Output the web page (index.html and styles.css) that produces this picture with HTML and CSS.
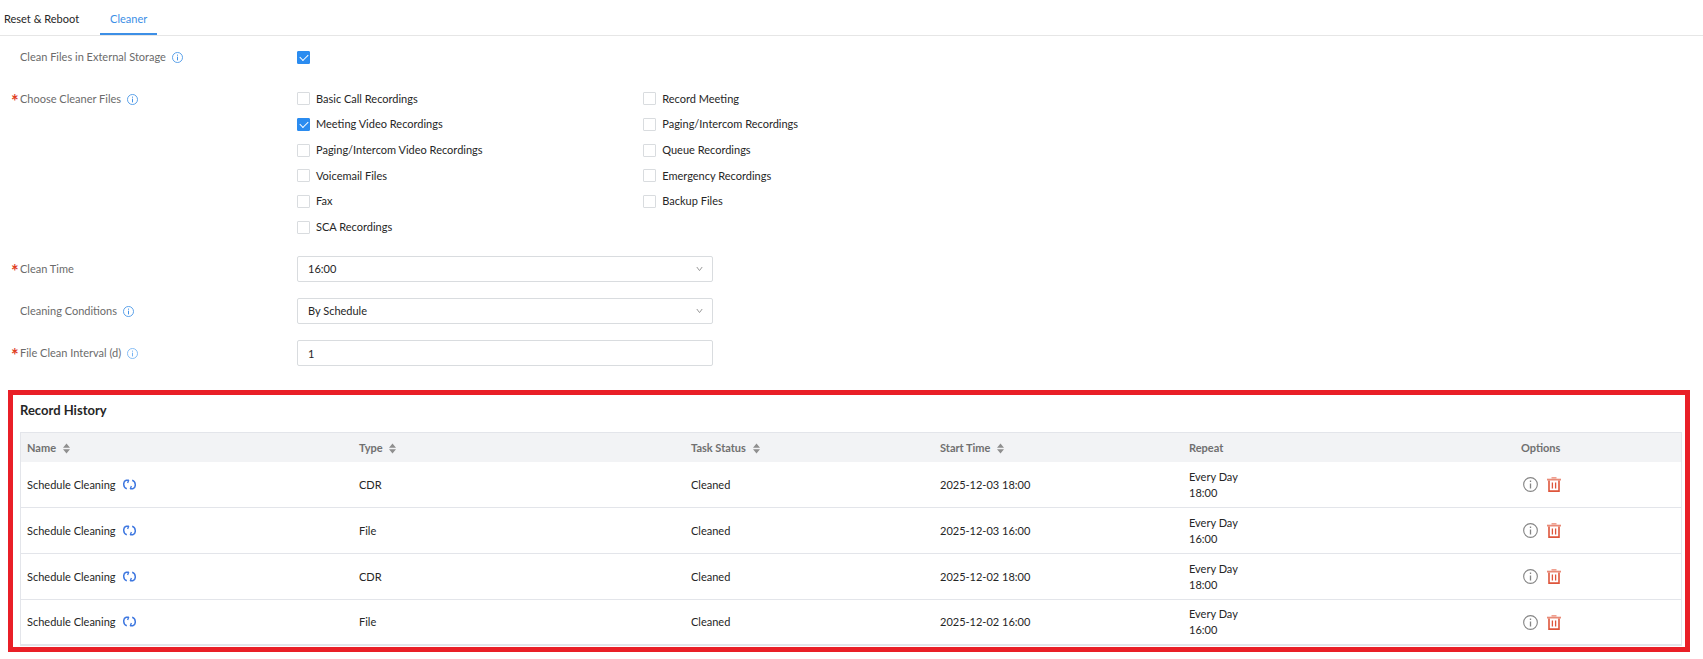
FILE: index.html
```html
<!DOCTYPE html>
<html lang="en">
<head>
    <meta charset="UTF-8">
    <meta name="viewport" content="width=device-width, initial-scale=1.0">
    <title>Cleaner</title>
    <link rel="stylesheet" href="styles.css">
</head>
<body>
    <!-- shared icons -->
    <svg class="sprite" aria-hidden="true">
        <symbol id="info" viewBox="0 0 16 16">
            <circle cx="8" cy="8" r="7.3" fill="none" stroke="currentColor" stroke-width="1.2" />
            <path d="M8 6.8v5.4M8 3.8v1.6" fill="none" stroke="currentColor" stroke-width="1.4" />
        </symbol>
        <symbol id="sort" viewBox="0 0 7 11">
            <path d="M0 4.8L3.5 0.4L7 4.8zM0 6.2L3.5 10.6L7 6.2z" fill="currentColor" />
        </symbol>
        <symbol id="loop" viewBox="0 0 13 11">
            <path d="M3.8 9.8C-0.2 8.6 -0.2 2.2 3.2 1.2H5.8M9.2 1.2C13.2 2.4 13.2 8.8 9.8 9.8H7.2" fill="none" stroke="currentColor" stroke-width="1.5" />
            <path d="M5.8 1L4.6 4M7.2 10L8.4 7" fill="none" stroke="currentColor" stroke-width="1.3" />
        </symbol>
        <symbol id="trash" viewBox="0 0 14 15">
            <path d="M4.5 0.8h5" stroke="#f0a090" stroke-width="1.6" />
            <path d="M0 2.6h14" stroke="#e88a77" stroke-width="1.8" />
            <path d="M2 3.4v10.7h10V3.4" fill="none" stroke="currentColor" stroke-width="1.6" />
            <path d="M5.4 5.5v6M8.6 5.5v6" stroke="currentColor" stroke-width="1.3" />
        </symbol>
    </svg>

    <nav class="tabs">
        <a href="#reset">Reset &amp; Reboot</a>
        <a href="#cleaner" class="active">Cleaner</a>
    </nav>

    <form class="form">
        <div class="row">
            <label class="label" for="external">Clean Files in External Storage <svg class="info"><use href="#info" /></svg></label>
            <div class="check"><input type="checkbox" id="external" checked></div>
        </div>
        <div class="row">
            <div class="label required" id="files-label">Choose Cleaner Files <svg class="info"><use href="#info" /></svg></div>
            <div class="files" role="group" aria-labelledby="files-label">
                <label class="check"><input type="checkbox">Basic Call Recordings</label>
                <label class="check"><input type="checkbox">Record Meeting</label>
                <label class="check"><input type="checkbox" checked>Meeting Video Recordings</label>
                <label class="check"><input type="checkbox">Paging/Intercom Recordings</label>
                <label class="check"><input type="checkbox">Paging/Intercom Video Recordings</label>
                <label class="check"><input type="checkbox">Queue Recordings</label>
                <label class="check"><input type="checkbox">Voicemail Files</label>
                <label class="check"><input type="checkbox">Emergency Recordings</label>
                <label class="check"><input type="checkbox">Fax</label>
                <label class="check"><input type="checkbox">Backup Files</label>
                <label class="check"><input type="checkbox">SCA Recordings</label>
            </div>
        </div>
        <div class="row">
            <label class="label required" for="time">Clean Time</label>
            <div class="field">
                <select id="time"><option>16:00</option></select>
                <svg class="arrow" viewBox="0 0 7 6"><path d="M0.8 1L3.5 4.6L6.2 1" /></svg>
            </div>
        </div>
        <div class="row">
            <label class="label" for="conditions">Cleaning Conditions <svg class="info"><use href="#info" /></svg></label>
            <div class="field">
                <select id="conditions"><option>By Schedule</option></select>
                <svg class="arrow" viewBox="0 0 7 6"><path d="M0.8 1L3.5 4.6L6.2 1" /></svg>
            </div>
        </div>
        <div class="row">
            <label class="label required" for="interval">File Clean Interval (d) <svg class="info light"><use href="#info" /></svg></label>
            <div class="field"><input type="text" id="interval" value="1"></div>
        </div>
    </form>

    <section class="history">
        <h2>Record History</h2>
        <table>
            <thead>
                <tr>
                    <th class="wide">Name <svg class="sort"><use href="#sort" /></svg></th>
                    <th class="wide">Type <svg class="sort"><use href="#sort" /></svg></th>
                    <th class="medium">Task Status <svg class="sort"><use href="#sort" /></svg></th>
                    <th class="medium">Start Time <svg class="sort"><use href="#sort" /></svg></th>
                    <th class="wide">Repeat</th>
                    <th>Options</th>
                </tr>
            </thead>
            <tbody>
                <tr>
                    <td>Schedule Cleaning <svg class="loop"><use href="#loop" /></svg></td>
                    <td>CDR</td>
                    <td>Cleaned</td>
                    <td>2025-12-03 18:00</td>
                    <td>Every Day<br>18:00</td>
                    <td>
                        <div class="options">
                            <button aria-label="Details"><svg class="details"><use href="#info" /></svg></button>
                            <button aria-label="Delete"><svg class="trash"><use href="#trash" /></svg></button>
                        </div>
                    </td>
                </tr>
                <tr>
                    <td>Schedule Cleaning <svg class="loop"><use href="#loop" /></svg></td>
                    <td>File</td>
                    <td>Cleaned</td>
                    <td>2025-12-03 16:00</td>
                    <td>Every Day<br>16:00</td>
                    <td>
                        <div class="options">
                            <button aria-label="Details"><svg class="details"><use href="#info" /></svg></button>
                            <button aria-label="Delete"><svg class="trash"><use href="#trash" /></svg></button>
                        </div>
                    </td>
                </tr>
                <tr>
                    <td>Schedule Cleaning <svg class="loop"><use href="#loop" /></svg></td>
                    <td>CDR</td>
                    <td>Cleaned</td>
                    <td>2025-12-02 18:00</td>
                    <td>Every Day<br>18:00</td>
                    <td>
                        <div class="options">
                            <button aria-label="Details"><svg class="details"><use href="#info" /></svg></button>
                            <button aria-label="Delete"><svg class="trash"><use href="#trash" /></svg></button>
                        </div>
                    </td>
                </tr>
                <tr>
                    <td>Schedule Cleaning <svg class="loop"><use href="#loop" /></svg></td>
                    <td>File</td>
                    <td>Cleaned</td>
                    <td>2025-12-02 16:00</td>
                    <td>Every Day<br>16:00</td>
                    <td>
                        <div class="options">
                            <button aria-label="Details"><svg class="details"><use href="#info" /></svg></button>
                            <button aria-label="Delete"><svg class="trash"><use href="#trash" /></svg></button>
                        </div>
                    </td>
                </tr>
            </tbody>
        </table>
    </section>
</body>
</html>
```

FILE: styles.css
```css
* {
    box-sizing: border-box;
}

body {
    margin: 0;
    background: #fff;
    color: #262626;
    font: 11px/16px Lato, "Liberation Sans", sans-serif;
}

.sprite {
    display: none;
}

.tabs {
    display: flex;
    gap: 11px;
    height: 36px;
    border-bottom: 1px solid #e6e6e6;
}
.tabs a {
    padding: 11px 10px 6px;
    border-bottom: 2px solid transparent;
    color: #262626;
    text-decoration: none;
}
.tabs a:first-child {
    padding-left: 4px;
}
.tabs .active {
    color: #3d8fe6;
    border-color: #3d8fe6;
}

.form {
    display: flex;
    flex-direction: column;
    gap: 16px;
    margin: 8px 21px 24px 20px;
}
.row {
    display: grid;
    grid-template-columns: 1fr 5fr;
}
.label {
    position: relative;
    display: flex;
    align-items: center;
    height: 26px;
    color: #6b6b6b;
}
.required::before {
    content: "*";
    position: absolute;
    left: -9px;
    top: 7px;
    color: #e0401f;
    font-size: 18px;
    font-weight: bold;
}
.info {
    width: 11px;
    height: 11px;
    margin-left: 6px;
    color: #3d8fe6;
}
.light {
    color: #6fb0f2;
}

.check {
    display: flex;
    align-items: center;
    gap: 6px;
}
.check input {
    appearance: none;
    width: 13px;
    height: 13px;
    margin: 0;
    border: 1px solid #d9dcdf;
    border-radius: 1px;
    background: #fff;
}
.check input:checked {
    display: grid;
    place-items: center;
    border-color: #2b8cf0;
    background: #2b8cf0;
}
.check input:checked::before {
    content: "";
    width: 7px;
    height: 4px;
    margin-bottom: 2px;
    border: solid #fff;
    border-width: 0 0 1px 1px;
    transform: rotate(-45deg);
}
.files {
    display: grid;
    grid-template-columns: repeat(4, 1fr);
    grid-auto-rows: 1fr;
    height: 154px;
}
.files .check:nth-child(odd) {
    grid-column: 1;
}

.field {
    position: relative;
    width: 30%;
}
.field select,
.field input {
    display: block;
    appearance: none;
    width: 100%;
    height: 26px;
    margin: 0;
    padding: 0 10px;
    border: 1px solid #d9dcdf;
    border-radius: 2px;
    background: #fff;
    color: #262626;
    font: inherit;
}
.arrow {
    position: absolute;
    top: 10px;
    right: 10px;
    width: 7px;
    height: 6px;
    fill: none;
    stroke: #999;
}

.history {
    margin: 0 13px 0 8px;
    padding: 7px 3px 1px 7px;
    border: 5px solid #e91f27;
}
.history h2 {
    margin: 0 0 14px;
    font-size: 13px;
    line-height: 16px;
}

table {
    width: 100%;
    table-layout: fixed;
    border-spacing: 0;
    border: 1px solid #e3e5ea;
    border-bottom-width: 2px;
}
th,
td {
    padding: 0 6px;
    text-align: left;
}
th {
    height: 29px;
    background: #f2f3f5;
    color: #707070;
}
td {
    height: 46px;
    border-bottom: 1px solid #e3e5ea;
}
tr:last-child td {
    height: 44px;
    border-bottom: 0;
}
.wide {
    width: 20%;
}
.medium {
    width: 15%;
}
.sort {
    width: 7px;
    height: 11px;
    margin-left: 4px;
    color: #8f8f8f;
    vertical-align: -2px;
}
.loop {
    width: 13px;
    height: 11px;
    margin-left: 5px;
    color: #3f78e0;
    vertical-align: -1px;
}
.options {
    display: flex;
    align-items: center;
    gap: 9px;
    padding-left: 2px;
}
.options button {
    display: flex;
    padding: 0;
    border: 0;
    background: none;
    cursor: pointer;
}
.details {
    width: 15px;
    height: 15px;
    color: #858585;
}
.trash {
    width: 14px;
    height: 15px;
    color: #de553b;
}
```
